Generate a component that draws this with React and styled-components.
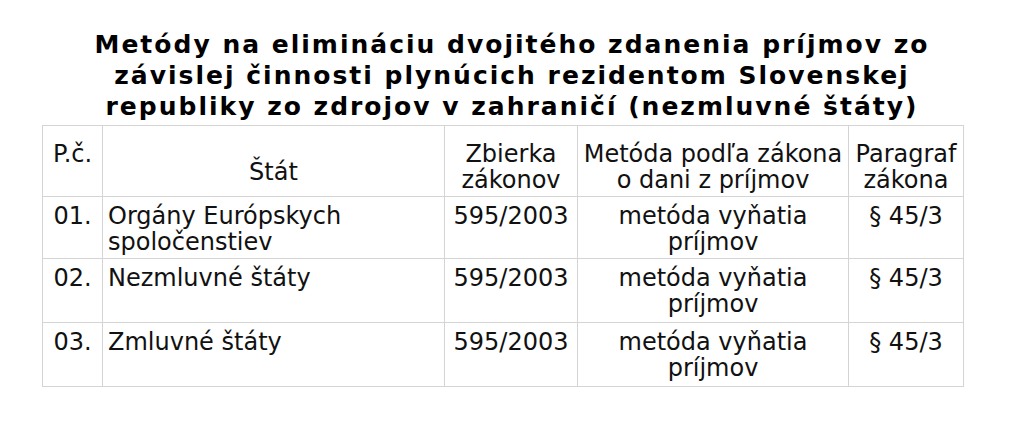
import styled, { createGlobalStyle } from "styled-components";

const GlobalStyle = createGlobalStyle`
  body {
    margin: 0;
    background: #fff;
    font-family: "DejaVu Sans", Verdana, sans-serif;
    color: #111;
  }
`;

const Page = styled.div`
  width: 1024px;
  padding-top: 29px;
`;

const Title = styled.h1`
  margin: 0;
  font-size: 25px;
  line-height: 31px;
  letter-spacing: 2px;
  font-weight: bold;
  text-align: center;
  color: #000;
`;

const Table = styled.table`
  margin: 3px 0 0 42px;
  width: 921px;
  table-layout: fixed;
  border-collapse: collapse;
  font-size: 24px;
  line-height: 26px;
`;

const HeadCell = styled.th`
  font-weight: normal;
  border: 1px solid #d4d4d4;
  padding: ${(p) => (p.$middle ? "24px 5px 3px" : "15px 5px 3px")};
  vertical-align: ${(p) => (p.$middle ? "middle" : "top")};
  text-align: center;
`;

const Row = styled.tr`
  height: ${(p) => p.$height}px;
`;

const Cell = styled.td`
  border: 1px solid #d4d4d4;
  padding: 6px 5px 3px;
  vertical-align: top;
  text-align: ${(p) => p.$align || "center"};
`;

const columns = [60, 342, 133, 271, 115];

const rows = [
  { no: "01.", state: "Orgány Európskych spoločenstiev", height: 62 },
  { no: "02.", state: "Nezmluvné štáty", height: 64 },
  { no: "03.", state: "Zmluvné štáty", height: 64 },
];

export default function App() {
  return (
    <Page>
      <GlobalStyle />
      <Title>
        Metódy na elimináciu dvojitého zdanenia príjmov zo
        <br />
        závislej činnosti plynúcich rezidentom Slovenskej
        <br />
        republiky zo zdrojov v zahraničí (nezmluvné štáty)
      </Title>
      <Table>
        <colgroup>
          {columns.map((w, i) => (
            <col key={i} style={{ width: w }} />
          ))}
        </colgroup>
        <thead>
          <Row $height={71}>
            <HeadCell>P.č.</HeadCell>
            <HeadCell $middle>Štát</HeadCell>
            <HeadCell>
              Zbierka
              <br />
              zákonov
            </HeadCell>
            <HeadCell>
              Metóda podľa zákona
              <br />o dani z príjmov
            </HeadCell>
            <HeadCell>
              Paragraf
              <br />
              zákona
            </HeadCell>
          </Row>
        </thead>
        <tbody>
          {rows.map((r) => (
            <Row key={r.no} $height={r.height}>
              <Cell>{r.no}</Cell>
              <Cell $align="left">{r.state}</Cell>
              <Cell>595/2003</Cell>
              <Cell>
                metóda vyňatia
                <br />
                príjmov
              </Cell>
              <Cell>§ 45/3</Cell>
            </Row>
          ))}
        </tbody>
      </Table>
    </Page>
  );
}
